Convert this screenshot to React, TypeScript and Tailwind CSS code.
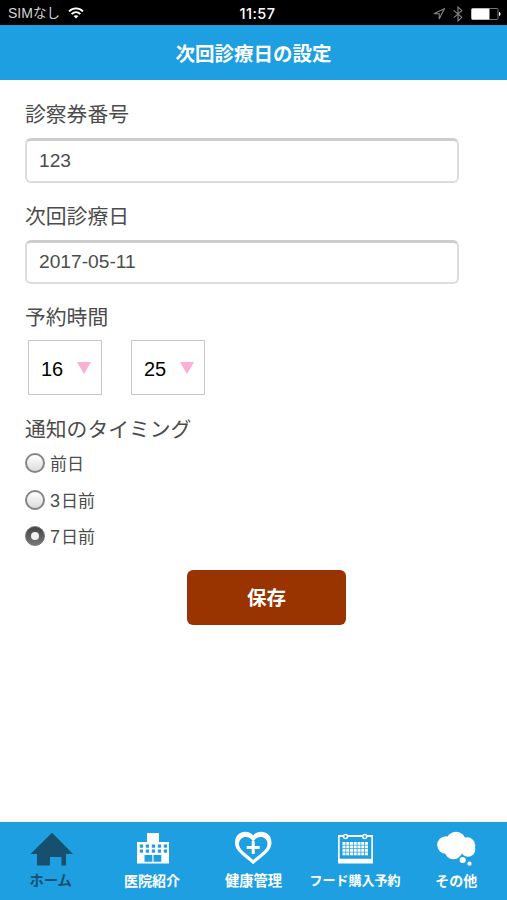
import { useState, type ReactNode } from "react";

const timings = ["前日", "3日前", "7日前"];

const windows = [
  [140.3, 845], [146.3, 845], [152.3, 845], [158.3, 845], [164.3, 845],
  [140.3, 850], [146.3, 850], [152.3, 850], [158.3, 850], [164.3, 850],
];

const cols = [0, 1, 2, 3, 4, 5, 6];
const rows = [0, 1, 2, 3];

function HomeIcon() {
  return (
    <svg viewBox="29 832 44 36" className="w-11 h-9" fill="currentColor">
      <path d="M52 832.8 73 854H66v11.500h-4.500V857H50v8.500H37V854h-6.500Z" />
    </svg>
  );
}

function HospitalIcon() {
  return (
    <svg viewBox="130.500 832 44 36" className="w-11 h-9">
      <path d="M147.500 833h12v9h10v21.500h-32V842h10Z" fill="#fff" />
      {windows.map(([x, y]) => (
        <rect key={`${x}-${y}`} x={x} y={y - 0.5} width="3.200" height="3.200" fill="#1e9fe1" />
      ))}
      <path d="M145 855h7.800v6.700H145zM154 855h7.800v6.700H154z" fill="#1e9fe1" />
    </svg>
  );
}

function HeartIcon() {
  return (
    <svg viewBox="231.500 832 44 36" className="w-11 h-9 overflow-visible">
      <path
        fill="#fff"
        fillRule="evenodd"
        d="M253.700 835.500C258 829.500 272 830 272 843C272 851.500 262.500 856 253.700 864.300C245 856 235.500 851.500 235.500 843C235.500 830 249.500 829.500 253.700 835.500ZM253.700 841.500C249 834 239.500 836.500 239.500 844C239.500 849.500 246 853 253.700 860C261.500 853 268 849.500 268 844C268 836.500 258.500 834 253.700 841.500Z"
      />
      <path d="M253.700 841v13M247.200 847.500h13" stroke="#fff" strokeWidth="3" />
    </svg>
  );
}

function CalendarIcon() {
  return (
    <svg viewBox="333 832 44 36" className="w-11 h-9">
      <path d="M338 835h35v28.500h-35z" fill="#fff" />
      <path d="M339.700 837h31.600v21.700h-31.600z" fill="#1e9fe1" />
      <circle cx="345.500" cy="836.500" r="2" fill="#1e9fe1" stroke="#fff" strokeWidth="1.500" />
      <circle cx="364.700" cy="836.500" r="2" fill="#1e9fe1" stroke="#fff" strokeWidth="1.500" />
      {rows.map((r) =>
        cols.map((c) => (
          <rect
            key={`${r}-${c}`}
            x={342.5 + c * 3.75}
            y={842 + r * 3.5}
            width="3"
            height="2.800"
            fill="#fff"
          />
        ))
      )}
    </svg>
  );
}

function CloudIcon() {
  return (
    <svg viewBox="434 832 44 36" className="w-11 h-9 overflow-visible" fill="#fff">
      <circle cx="446" cy="845" r="8.800" />
      <circle cx="456" cy="841.500" r="9.800" />
      <circle cx="467" cy="845.500" r="8.300" />
      <circle cx="468" cy="849.500" r="7.300" />
      <circle cx="453.500" cy="850.500" r="8.800" />
      <circle cx="462.500" cy="859.800" r="4" fill="#1e9fe1" />
      <circle cx="462.700" cy="860" r="3.100" />
      <circle cx="469.500" cy="863.700" r="2.100" />
    </svg>
  );
}

const tabs: { label: string; icon: ReactNode; size: string; active?: boolean }[] = [
  { label: "ホーム", icon: <HomeIcon />, size: "text-[14.300px]", active: true },
  { label: "医院紹介", icon: <HospitalIcon />, size: "text-[14px]" },
  { label: "健康管理", icon: <HeartIcon />, size: "text-[14.300px]" },
  { label: "フード購入予約", icon: <CalendarIcon />, size: "text-[13px]" },
  { label: "その他", icon: <CloudIcon />, size: "text-[14px]" },
];

function StatusBar() {
  return (
    <div className="grid grid-cols-3 items-center h-[25px] pt-0.5 pl-2 pr-1.5 bg-black text-white">
      <div className="flex items-center gap-2 text-[14px] text-[#d4d4d4]">
        <span className="whitespace-nowrap">
          SIM<span className="text-[13.500px]">なし</span>
        </span>
        <svg viewBox="0 0 16 12" className="w-4 h-3 mb-0.5" fill="none" stroke="#fff" strokeWidth="1.900">
          <path d="M1 4.400C5 .4 11 .4 15 4.400M3.600 7.100C6.200 4.600 9.800 4.600 12.400 7.100" />
          <path d="M8 11.500 5.600 9.100C7 7.800 9 7.800 10.400 9.100Z" fill="#fff" stroke="none" />
        </svg>
      </div>
      <div className="text-center text-[14.5px] font-medium font-[Inter,sans-serif] tracking-[0.5px] pl-1.5">
        11:57
      </div>
      <div className="flex items-center justify-end">
        <svg viewBox="0 0 12 12" className="w-3 h-3 mr-2" fill="none" stroke="#858585" strokeWidth="1.100">
          <path d="M11.300.8.800 5.800h5.400V11Z" />
        </svg>
        <svg viewBox="0 0 10 16" className="w-2.5 h-4 mr-2" fill="none" stroke="#858585" strokeWidth="1.100">
          <path d="M.8 4.300 8.800 11.300 5 15V1L8.800 4.700.8 11.700" />
        </svg>
        <svg viewBox="0 0 30 12" className="w-[30px] h-3">
          <rect x=".5" y=".5" width="26.500" height="11" rx="1" fill="none" stroke="#777" />
          <rect x=".5" y=".5" width="18" height="11" rx="1" fill="#fff" />
          <path d="M28 4c2 .5 2 3.500 0 4Z" fill="#fff" />
        </svg>
      </div>
    </div>
  );
}

function TextField({ label, value }: { label: string; value: string }) {
  return (
    <label className="block mb-[19px]">
      <span className="block h-[30px] mb-2 text-[20.800px] leading-[30px] whitespace-nowrap">
        {label}
      </span>
      <input
        defaultValue={value}
        className="block w-[434px] h-[44.500px] px-3 text-[19.200px] bg-white border-2 border-[#dcdcdc] border-t-[3px] border-t-[#cdcdcd] rounded-md outline-none"
      />
    </label>
  );
}

function TimeSelect({ value }: { value: string }) {
  return (
    <button className="flex items-center justify-between w-[74px] h-[55px] pt-0.5 pl-3 pr-2.5 border border-[#c8c8c8] text-[20px] text-black">
      {value}
      <svg viewBox="0 0 14 12" className="w-3.5 h-3 mb-0.5" fill="#fbaed6">
        <path d="M0 0h14L7 12Z" />
      </svg>
    </button>
  );
}

export default function App() {
  const [timing, setTiming] = useState("7日前");

  return (
    <div className="flex flex-col h-[900px] w-[507px] overflow-hidden bg-white text-[#4c4c4c] font-['Liberation_Sans','Noto_Sans_CJK_JP',sans-serif]">
      <StatusBar />
      <header className="h-[55px] bg-[#1e9fe1] text-center text-[19.500px] leading-[58px] font-bold text-white">
        次回診療日の設定
      </header>

      <main className="flex-1 pl-[25px] pt-5">
        <TextField label="診察券番号" value="123" />
        <TextField label="次回診療日" value="2017-05-11" />
        <h2 className="h-[30px] text-[20.800px] leading-[30px]">予約時間</h2>
        <div className="flex gap-[29px] mt-[7px] pl-[3px]">
          <TimeSelect value="16" />
          <TimeSelect value="25" />
        </div>
        <h2 className="h-[30px] mt-5 text-[20.800px] leading-[30px]">通知のタイミング</h2>
        <div role="radiogroup">
          {timings.map((t) => (
            <button
              key={t}
              role="radio"
              aria-checked={t === timing}
              onClick={() => setTiming(t)}
              className="flex items-center h-[36.600px] gap-[5px] text-[17px]"
            >
              {t === timing ? (
                <span className="flex items-center justify-center size-5 rounded-full border border-[#777] bg-linear-to-b from-[#444] to-[#777]">
                  <span className="size-2 rounded-full bg-[#f0f0f0]" />
                </span>
              ) : (
                <span className="size-5 rounded-full border-2 border-[#858585] bg-linear-to-b from-white to-[#dcdcdc]" />
              )}
              <span className="pt-0.5">
                {/\d/.test(t) && <span className="text-lg mr-px">{t[0]}</span>}
                {t.replace(/\d/, "")}
              </span>
            </button>
          ))}
        </div>
        <button className="block w-[159px] h-[55px] ml-[162px] mt-[15px] pt-[3px] rounded-md bg-[#993300] text-[19.500px] font-bold text-white">
          保存
        </button>
      </main>

      <nav className="grid grid-cols-5 h-[78px] bg-[#1e9fe1]">
        {tabs.map(({ label, icon, size, active }) => (
          <button
            key={label}
            className={`flex flex-col items-center pt-2.5 font-bold whitespace-nowrap ${size} ${
              active ? "text-[#16506e]" : "text-white"
            }`}
          >
            {icon}
            <span className="mt-[3px] leading-5">{label}</span>
          </button>
        ))}
      </nav>
    </div>
  );
}
